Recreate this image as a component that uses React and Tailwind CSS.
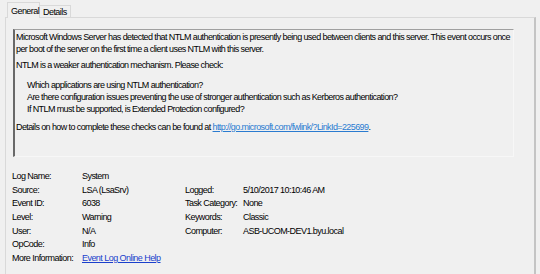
import React from 'react'

const rows = [
  ['Log Name:', 'System', '', ''],
  ['Source:', 'LSA (LsaSrv)', 'Logged:', '5/10/2017 10:10:46 AM'],
  ['Event ID:', '6038', 'Task Category:', 'None'],
  ['Level:', 'Warning', 'Keywords:', 'Classic'],
  ['User:', 'N/A', 'Computer:', 'ASB-UCOM-DEV1.byu.local'],
  ['OpCode:', 'Info', '', ''],
]

function App() {
  return (
    <div
      className="w-[540px] h-[274px] bg-[#f0f0f0] text-black overflow-hidden flex flex-col text-[9px] leading-[12px] tracking-[-0.55px]"
      style={{ fontFamily: '"Liberation Sans", Arial, sans-serif' }}
    >
      {/* tabs */}
      <div className="flex items-end pl-[7px] pt-[2px] h-[18px] relative z-10">
        <div className="w-[33px] h-[16px] pl-[3px] flex items-center border border-b-0 border-[#d9d9d9] bg-[#f0f0f0]">
          General
        </div>
        <div className="w-[31px] h-[13px] pl-[3px] flex items-center border border-l-0 border-[#d9d9d9] bg-[#f0f0f0]">
          Details
        </div>
      </div>

      {/* page */}
      <div className="ml-[5px] w-[531px] flex-1 -mt-[1px] border-t border-l border-[#d9d9d9] border-r-2 border-r-[#c4c4c4] pt-[11px] pl-[7px]">
        <div className="w-[501px] h-[128px] tracking-[-0.6px] border-t border-t-[#a0a0a0] border-l-2 border-l-[#696969] border-r border-r-[#f7f7f7] border-b border-b-[#f7f7f7] pl-[1px] pt-[1px]">
          <p>Microsoft Windows Server has detected that NTLM authentication is presently being used between clients and this server. This event occurs once per boot of the server on the first time a client uses NTLM with this server.</p>
          <p className="mt-[4px]">NTLM is a weaker authentication mechanism. Please check:</p>
          <div className="mt-[8px] pl-[11px]">
            <p>Which applications are using NTLM authentication?</p>
            <p>Are there configuration issues preventing the use of stronger authentication such as Kerberos authentication?</p>
            <p>If NTLM must be supported, is Extended Protection configured?</p>
          </div>
          <p className="mt-[6px]">
            Details on how to complete these checks can be found at{' '}
            <span className="text-[#2a7bd0] underline">http://go.microsoft.com/fwlink/?LinkId=225699</span>.
          </p>
        </div>

        <div className="mt-[12px] -ml-[1px] grid grid-cols-[70px_103px_58px_1fr] auto-rows-[13.7px] items-center">
          {rows.map((r) => (
            <React.Fragment key={r[0]}>
              <div>{r[0]}</div>
              <div>{r[1]}</div>
              <div>{r[2]}</div>
              <div>{r[3]}</div>
            </React.Fragment>
          ))}
          <div>More Information:</div>
          <div className="col-span-3">
            <span className="text-[#1a3fcc] underline">Event Log Online Help</span>
          </div>
        </div>
      </div>
    </div>
  )
}

export default App
